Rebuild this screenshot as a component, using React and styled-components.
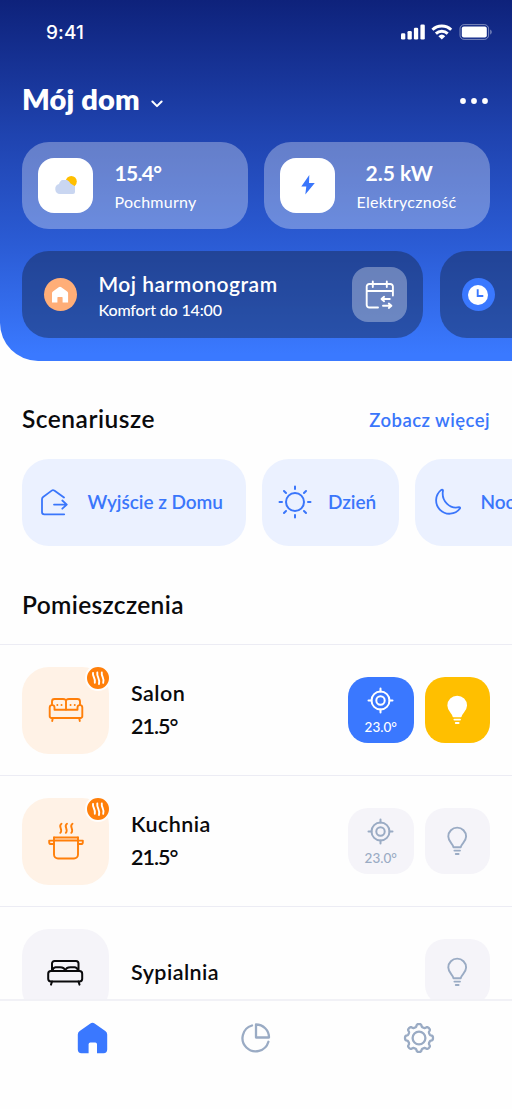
import React from "react";
import styled, { createGlobalStyle } from "styled-components";

// Styles
const GlobalStyle = createGlobalStyle`
  * {
    box-sizing: border-box;
  }
  body {
    margin: 0;
    background: #fefefe;
    overflow: hidden;
    font-family: Lato, "Open Sans", sans-serif;
  }
  svg {
    display: block;
    flex: none;
  }
`;

const Screen = styled.div`
  display: flex;
  flex-direction: column;
  width: 512px;
  height: 1109px;
  overflow: hidden;
  color: #0a0a0c;
`;

const Header = styled.header`
  display: flex;
  flex-direction: column;
  flex: none;
  height: 360.5px;
  border-bottom-left-radius: 38px;
  overflow: hidden;
  color: #fff;
  background: linear-gradient(180deg, #0e227b 0%, #1f43af 37%, #2b5cd5 68%, #3a79ff 98%);
`;

const StatusBar = styled.div`
  display: flex;
  align-items: center;
  justify-content: space-between;
  height: 64px;
  padding: 0 20px 0 46px;
`;

const Time = styled.span`
  font-family: Inter, sans-serif;
  font-size: 19px;
  font-weight: 500;
  letter-spacing: 0.1px;
`;

const TitleBar = styled.div`
  display: flex;
  align-items: center;
  justify-content: space-between;
  height: 77.5px;
  padding: 0 24px 3px 22px;
`;

const HomePicker = styled.div`
  display: flex;
  align-items: center;
  gap: 11px;
  padding-bottom: 4px;

  svg {
    margin-top: 9px;
  }
`;

const Text = styled.span`
  display: block;
  white-space: nowrap;
  font-size: ${(p) => p.$size}px;
  line-height: ${(p) => p.$line || 24}px;
  font-weight: ${(p) => p.$weight || 600};
  letter-spacing: ${(p) => p.$track || 0}px;
`;

const Metrics = styled.div`
  display: flex;
  gap: 16px;
  padding: 0 22px;
`;

const MetricCard = styled.div`
  display: flex;
  align-items: center;
  gap: 21.5px;
  flex: 1;
  height: 87.5px;
  padding: 0 16px;
  border-radius: 27px;
  background: rgba(255, 255, 255, 0.31);
`;

const MetricInfo = styled.div`
  display: flex;
  flex-direction: column;
  gap: 5px;
  padding-top: 4px;
`;

const Power = styled.div`
  padding-left: 9px;
`;

const Tile = styled.div`
  display: flex;
  align-items: center;
  justify-content: center;
  flex: none;
  width: 55px;
  height: 55px;
  border-radius: 16px;
  background: ${(p) => (p.$glass ? "rgba(255, 255, 255, 0.32)" : "#fff")};
`;

const Schedules = styled.div`
  display: flex;
  gap: 17px;
  padding: 22px 0 0 22px;
`;

const ScheduleCard = styled.div`
  display: flex;
  align-items: center;
  flex: none;
  width: 401px;
  height: 87px;
  padding: 0 16px 0 21.5px;
  border-radius: 27px;
  background: rgba(22, 38, 74, 0.45);
`;

const ScheduleInfo = styled.div`
  flex: 1;
  margin-left: 22px;
  padding-top: 4px;
`;

const Round = styled.div`
  display: flex;
  align-items: center;
  justify-content: center;
  width: 33px;
  height: 33px;
  border-radius: 50%;
  background: ${(p) => p.$color};
`;

const Content = styled.main`
  flex: 1;
  min-height: 0;
  overflow: hidden;
`;

const SectionHead = styled.div`
  display: flex;
  align-items: center;
  justify-content: space-between;
  height: ${(p) => p.$height}px;
  padding: ${(p) => p.$top}px 22px 0 22px;
`;

const More = styled.a`
  color: #3a76fb;
  margin-top: 3px;
`;

const Scenarios = styled.div`
  display: flex;
  gap: 16.5px;
  padding-left: 22px;
`;

const Scenario = styled.button`
  display: flex;
  align-items: center;
  flex: none;
  gap: ${(p) => p.$gap}px;
  width: ${(p) => p.$width}px;
  height: 86.5px;
  padding: 0 0 0 ${(p) => p.$left}px;
  border: none;
  border-radius: 27px;
  font-family: inherit;
  color: #3a76fb;
  background: #ebf1ff;
`;

const Room = styled.div`
  display: flex;
  align-items: center;
  height: 131px;
  padding: 0 22px;
  border-top: 1.5px solid #ececf4;
`;

const RoomTile = styled.div`
  position: relative;
  display: flex;
  align-items: center;
  justify-content: center;
  width: 87px;
  height: 87px;
  border-radius: 27px;
  color: ${(p) => (p.$warm ? "#ff7f0a" : "#0a0a0c")};
  background: ${(p) => (p.$warm ? "#fff2e6" : "#f5f4f9")};
`;

const HeatBadge = styled.div`
  position: absolute;
  top: -2px;
  right: -2px;
  width: 26px;
  height: 26px;
  border: 2px solid #fefefe;
  border-radius: 50%;
  color: #fff;
  background: #ff7f0a;
`;

const RoomInfo = styled.div`
  display: flex;
  flex-direction: column;
  flex: 1;
  gap: 9px;
  margin-left: 22px;
  padding-bottom: 1px;
`;

const Controls = styled.div`
  display: flex;
  gap: 11px;
`;

const themes = {
  blue: ["#3a78ff", "#fff"],
  yellow: ["#ffbf00", "#fff"],
  off: ["#f5f4f9", "#9aabc4"],
};

const Control = styled.div`
  display: flex;
  flex-direction: column;
  align-items: center;
  justify-content: center;
  gap: 3px;
  width: 65.5px;
  height: 65.5px;
  padding-top: ${(p) => (p.$target ? 3 : 0)}px;
  border-radius: 20px;
  background: ${(p) => themes[p.$theme][0]};
  color: ${(p) => themes[p.$theme][1]};
`;

const Nav = styled.nav`
  display: flex;
  flex: none;
  justify-content: space-between;
  height: 110px;
  padding: 21px 77px 0 76px;
  border-top: 2px solid #f1f1f6;
  background: #fefefe;
  color: #9aabc4;
`;

// Icons
const Icon = ({ w, h, sw = 2, children }) => (
  <svg
    width={w}
    height={h}
    viewBox={`0 0 ${w} ${h}`}
    fill="none"
    stroke="currentColor"
    strokeWidth={sw}
    strokeLinecap="round"
    strokeLinejoin="round"
  >
    {children}
  </svg>
);

const StatusIcons = () => (
  <svg width="92" height="18" viewBox="0 0 92 18" fill="#fff">
    <rect x="1" y="10.3" width="4.3" height="6.3" rx="1.3" />
    <rect x="7.5" y="8" width="4.3" height="8.6" rx="1.3" />
    <rect x="13.9" y="4.8" width="4.3" height="11.8" rx="1.3" />
    <rect x="20.4" y="1.5" width="4.4" height="15.1" rx="1.3" />
    <g fill="none" stroke="#fff" strokeWidth="2.9">
      <path d="M32.4 6.8a13.6 13.6 0 0 1 18.8 0" />
      <path d="M35.9 10.6a8.5 8.5 0 0 1 11.8 0" />
    </g>
    <path d="M38.4 13.2a5 5 0 0 1 6.8 0l-3.4 3.4z" />
    <rect x="60" y="1.6" width="28.6" height="14.8" rx="4.2" fill="none" stroke="#fff" strokeOpacity="0.45" />
    <rect x="61.8" y="3.6" width="25" height="10.8" rx="2" />
    <path d="M90.3 6.4v5.2c1.8-.8 1.8-4.4 0-5.2z" fillOpacity="0.5" />
  </svg>
);

const Chevron = () => (
  <Icon w={12} h={8} sw={2}>
    <path d="M1.4 1.5 6 6.1l4.6-4.6" />
  </Icon>
);

const Dots = () => (
  <svg width="28" height="6" viewBox="0 0 28 6" fill="#fff">
    <circle cx="3" cy="3" r="2.9" />
    <circle cx="14" cy="3" r="2.9" />
    <circle cx="25" cy="3" r="2.9" />
  </svg>
);

const Cloud = () => (
  <svg width="24" height="20" viewBox="0 0 24 20">
    <circle cx="17.3" cy="6.5" r="5.5" fill="#ffbf00" />
    <path
      d="M6 19a5.1 5.1 0 0 1-1-10Q6.300 5.300 8.500 5h4.500q2.500 1 3.500 3.500l4.500 2.700V17q0 2-2 2z"
      fill="#c9d6f1"
    />
  </svg>
);

const Bolt = () => (
  <svg width="16" height="22" viewBox="0 0 16 22">
    <path d="M9.3 1 1.3 12.6h5L5.300 20.6 14.8 9H9z" fill="#3a76fb" />
  </svg>
);

const SmallHome = () => (
  <svg width="18" height="18" viewBox="0 0 18 18" fill="#fff">
    <path d="M9 .8q.7 0 1.3.5l5.900 4.1q.9.7.9 1.8v9.300H11.600v-5q0-.6-.6-.6H7q-.6 0-.6.6v5H1V7.200q0-1.100.9-1.800l5.800-4.100Q8.300.8 9 .8z" />
  </svg>
);

const Clock = () => (
  <svg width="20" height="20" viewBox="0 0 20 20">
    <circle cx="10" cy="10" r="10" fill="#fff" />
    <path d="M9.700 4.200V11h5.600" fill="none" stroke="#3a78ff" strokeWidth="1.900" />
  </svg>
);

const CalendarSwap = () => (
  <Icon w={30} h={30} sw={1.9}>
    <path d="M13 27.500H4.300a2.600 2.600 0 0 1-2.600-2.600V6.600A2.600 2.600 0 0 1 4.300 4h21a2.600 2.600 0 0 1 2.600 2.600V15.500M1.700 11h26.200M7.800 1.500V7M21.800 1.500V7" />
    <path d="M24.800 19H16.800M19.100 16.800 16.500 19l2.600 2.200M18 25.800H26M23.800 23.600 26.400 25.800 23.800 28" />
  </Icon>
);

const LeaveHome = () => (
  <Icon w={32} h={32} sw={1.8}>
    <path d="M25.200 28.300H5.300a2.300 2.300 0 0 1-2.300-2.300V13.200q0-1.400 1.100-2.200L12.700 4.600q1.300-1 2.600 0L25 11.500" />
    <path d="M15 18.600H27.800M23.300 14.500l4.500 4.100-4.500 4.100" />
  </Icon>
);

const Sun = () => (
  <Icon w={34} h={34} sw={2}>
    <circle cx="17" cy="17" r="9" />
    <path d="M17 1.500V4M17 30v2.500M1.500 17H4M30 17h2.500M6 6l2 2M26 26l2 2M6 28l2-2M26 8l2-2" />
  </Icon>
);

const Moon = () => (
  <Icon w={32} h={32} sw={1.8}>
    <path d="M11.300 3.900A13.300 13.300 0 1 0 30 22.500q.5-1.300-.9-1.300C20 23.500 11 15 13 4.500q0-1.100-1.700-.6z" />
  </Icon>
);

const Sofa = () => (
  <Icon w={36} h={26} sw={1.9}>
    <path d="M4 8V4.500A2.500 2.500 0 0 1 6.500 2H15q1.500 0 3 1 1.500-1 3-1h8.500A2.500 2.500 0 0 1 32 4.500V8M18 3v9.500" />
    <path d="M6.500 12.800V10.500a2.300 2.300 0 0 0-4.800 0V19A1.800 1.800 0 0 0 3.500 21h29a1.800 1.800 0 0 0 1.800-2V10.500a2.300 2.300 0 0 0-4.800 0v2.300z" />
    <path d="M4.700 21.500 4.200 24M31.300 21.500l.5 2.500" />
    <path d="M9.300 8h.1M13.500 8h.1M22.500 8h.1M26.700 8h.1" />
  </Icon>
);

const Pot = () => (
  <Icon w={36} h={38} sw={1.9}>
    <path d="M6 15.500h24M6 18.500h24V32.500a4 4 0 0 1-4 4H10a4 4 0 0 1-4-4z" />
    <path d="M6 15.500v3M30 15.500v3M6 18.600H1.200v1.800q0 1.600 2 1.600H6M30 18.600h4.800v1.800q0 1.600-2 1.600H30" />
    <path d="M13.500 1.700C9.500 4 15.500 7.500 12.300 10.800M19 1.700c-4 2.300 2 5.800-1.200 9.100M24.500 1.700c-4 2.300 2 5.800-1.200 9.100" />
  </Icon>
);

const Bed = () => (
  <Icon w={37} h={27} sw={2}>
    <path d="M5 11.500V4.500A2.500 2.500 0 0 1 7.500 2h21.500a2.500 2.500 0 0 1 2.500 2.500v7" />
    <rect x="1.200" y="12" width="34" height="10.500" rx="2.700" />
    <path d="M5.500 11.500Q6 8.600 8.500 8.300h4.500q4.500 0 5.200 3.500.8-3.500 5.200-3.500h4.500q2.500.3 3.100 3.200M5 22.500 4 25.600M31.500 22.500 32.500 25.600" />
  </Icon>
);

const Heat = () => (
  <Icon w={22} h={22} sw={1.9}>
    <path d="M6 6C5.300 9.500 9 11.500 7.800 15.800M10.300 5.500c-.8 4.500 3.200 6.500 1.700 11.500M14.800 5.500c-.8 4 3.200 6 1.400 10.300" />
  </Icon>
);

const Target = () => (
  <Icon w={27} h={27} sw={2}>
    <circle cx="13.500" cy="13.500" r="9" />
    <circle cx="13.500" cy="13.500" r="4.200" />
    <path d="M13.500 1.500v3M13.500 22.500v3M1.500 13.500h3M22.500 13.500h3" />
  </Icon>
);

const Bulb = ({ solid }) => (
  <Icon w={22} h={30} sw={1.9}>
    <path
      d="M7.500 21.300C7 17.500 2.300 15.800 2.300 10.500a8.900 8.900 0 0 1 17.800 0c0 5.300-4.900 7-5.400 10.800z"
      fill={solid ? "currentColor" : "none"}
    />
    <path d="M8.400 24.600h5.600M9.800 28h2.800" />
  </Icon>
);

const NavHome = () => (
  <svg width="32" height="32" viewBox="0 0 32 32" fill="#3a78ff">
    <path d="M16.500.7q1.200 0 2.100.7l10.700 7.500q1.900 1.300 1.900 3.500V27.500q0 3.700-3.700 3.700H21v-9q0-1.700-1.700-1.700h-5q-1.700 0-1.700 1.700v9H5.500q-3.700 0-3.700-3.700V12.400q0-2.200 1.900-3.500L14.400 1.400q.9-.7 2.100-.7z" />
  </svg>
);

const Pie = () => (
  <Icon w={32} h={32} sw={2.3}>
    <path d="M12 3.500A13.200 13.200 0 1 0 28.400 19.800" />
    <path d="M16 2.500V15.500H29A13 13 0 0 0 16 2.500z" />
  </Icon>
);

// eight soft teeth, the outline is sampled around the hub
const gearPath = () => {
  const points = [];
  for (let i = 0; i < 240; i++) {
    const a = (i / 240) * Math.PI * 2;
    const r = 12.6 + 1.4 * Math.tanh(2.2 * Math.cos(8 * a));
    points.push(`${(16 + r * Math.sin(a)).toFixed(2)} ${(16 - r * Math.cos(a)).toFixed(2)}`);
  }
  return `M${points.join("L")}z`;
};

const Gear = () => (
  <Icon w={32} h={32} sw={2.3}>
    <path d={gearPath()} />
    <circle cx="16" cy="16" r="6.400" />
  </Icon>
);

const scenarios = [
  { name: "Wyjście z Domu", icon: <LeaveHome />, width: 223.5, gap: 17, left: 16.5 },
  { name: "Dzień", icon: <Sun />, width: 136.5, gap: 16, left: 16 },
  { name: "Noc", icon: <Moon />, width: 136.5, gap: 19, left: 14.5 },
];

const rooms = [
  { name: "Salon", temp: "21.5°", target: "23.0°", icon: <Sofa />, on: true },
  { name: "Kuchnia", temp: "21.5°", target: "23.0°", icon: <Pot /> },
  { name: "Sypialnia", icon: <Bed /> },
];

function App() {
  return (
    <Screen>
      <GlobalStyle />
      <Header>
        <StatusBar>
          <Time>9:41</Time>
          <StatusIcons />
        </StatusBar>
        <TitleBar>
          <HomePicker>
            <Text $size={29} $line={34} $weight={800} $track={0.15}>Mój dom</Text>
            <Chevron />
          </HomePicker>
          <Dots />
        </TitleBar>
        <Metrics>
          <MetricCard>
            <Tile><Cloud /></Tile>
            <MetricInfo>
              <Text $size={21} $weight={700} $track={-0.7}>15.4°</Text>
              <Text $size={16} $weight={400} $track={0.25}>Pochmurny</Text>
            </MetricInfo>
          </MetricCard>
          <MetricCard>
            <Tile><Bolt /></Tile>
            <MetricInfo>
              <Power>
                <Text $size={21} $weight={700}>2.5 kW</Text>
              </Power>
              <Text $size={16} $weight={400} $track={0.25}>Elektryczność</Text>
            </MetricInfo>
          </MetricCard>
        </Metrics>
        <Schedules>
          <ScheduleCard>
            <Round $color="#ffae78"><SmallHome /></Round>
            <ScheduleInfo>
              <Text $size={21} $line={26} $track={0.5}>Moj harmonogram</Text>
              <Text $size={16} $line={26} $weight={500} $track={-0.15}>Komfort do 14:00</Text>
            </ScheduleInfo>
            <Tile $glass><CalendarSwap /></Tile>
          </ScheduleCard>
          <ScheduleCard>
            <Round $color="#3a78ff"><Clock /></Round>
          </ScheduleCard>
        </Schedules>
      </Header>
      <Content>
        <SectionHead $height={98.5} $top={18}>
          <Text $size={24.5} $line={30} $track={0.5}>Scenariusze</Text>
          <More><Text $size={18.5} $track={0.45}>Zobacz więcej</Text></More>
        </SectionHead>
        <Scenarios>
          {scenarios.map((s) => (
            <Scenario key={s.name} $width={s.width} $gap={s.gap} $left={s.left}>
              {s.icon}
              <Text $size={19} $track={-0.05}>{s.name}</Text>
            </Scenario>
          ))}
        </Scenarios>
        <SectionHead $height={98.5} $top={20}>
          <Text $size={24.5} $line={30} $track={0.35}>Pomieszczenia</Text>
        </SectionHead>
        {rooms.map((room) => (
          <Room key={room.name}>
            <RoomTile $warm={Boolean(room.temp)}>
              {room.icon}
              {room.temp && <HeatBadge><Heat /></HeatBadge>}
            </RoomTile>
            <RoomInfo>
              <Text $size={21.5} $track={0.45}>{room.name}</Text>
              {room.temp && <Text $size={21.5} $track={-1}>{room.temp}</Text>}
            </RoomInfo>
            <Controls>
              {room.target && (
                <Control $target $theme={room.on ? "blue" : "off"}>
                  <Target />
                  <Text $size={13.5} $line={20} $weight={500}>{room.target}</Text>
                </Control>
              )}
              <Control $theme={room.on ? "yellow" : "off"}>
                <Bulb solid={room.on} />
              </Control>
            </Controls>
          </Room>
        ))}
      </Content>
      <Nav>
        <NavHome />
        <Pie />
        <Gear />
      </Nav>
    </Screen>
  );
}

export default App;
